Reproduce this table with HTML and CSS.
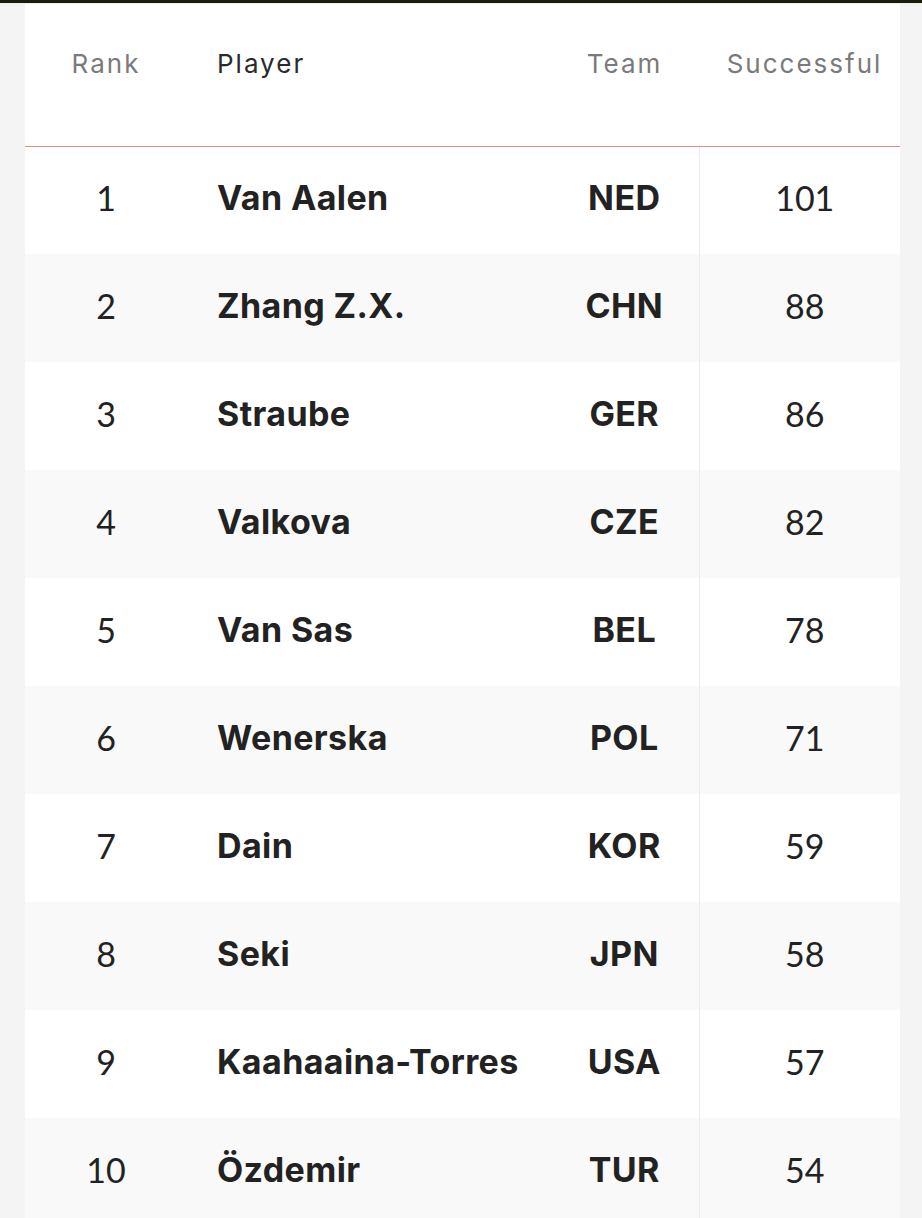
FILE: index.html
```html
<!DOCTYPE html>
<html>
<head>
<meta charset="utf-8">
<link rel="stylesheet" href="styles.css">
</head>
<body>
<div class="topbar"></div>
<div class="page">
  <table class="stats">
    <thead>
      <tr>
        <th class="c-rank">Rank</th>
        <th class="c-player">Player</th>
        <th class="c-team">Team</th>
        <th class="c-succ">Successful</th>
      </tr>
    </thead>
    <tbody>
      <tr><td class="c-rank">1</td><td class="c-player">Van Aalen</td><td class="c-team">NED</td><td class="c-succ">101</td></tr>
      <tr><td class="c-rank">2</td><td class="c-player">Zhang Z.X.</td><td class="c-team">CHN</td><td class="c-succ">88</td></tr>
      <tr><td class="c-rank">3</td><td class="c-player">Straube</td><td class="c-team">GER</td><td class="c-succ">86</td></tr>
      <tr><td class="c-rank">4</td><td class="c-player">Valkova</td><td class="c-team">CZE</td><td class="c-succ">82</td></tr>
      <tr><td class="c-rank">5</td><td class="c-player">Van Sas</td><td class="c-team">BEL</td><td class="c-succ">78</td></tr>
      <tr><td class="c-rank">6</td><td class="c-player">Wenerska</td><td class="c-team">POL</td><td class="c-succ">71</td></tr>
      <tr><td class="c-rank">7</td><td class="c-player">Dain</td><td class="c-team">KOR</td><td class="c-succ">59</td></tr>
      <tr><td class="c-rank">8</td><td class="c-player">Seki</td><td class="c-team">JPN</td><td class="c-succ">58</td></tr>
      <tr><td class="c-rank">9</td><td class="c-player">Kaahaaina-Torres</td><td class="c-team">USA</td><td class="c-succ">57</td></tr>
      <tr><td class="c-rank">10</td><td class="c-player">Özdemir</td><td class="c-team">TUR</td><td class="c-succ">54</td></tr>
    </tbody>
  </table>
</div>
</body>
</html>
```
FILE: styles.css
```css
html, body {
  margin: 0;
  padding: 0;
  background: #f4f4f4;
  height: 100%;
  overflow: hidden;
}
.topbar {
  height: 3px;
  background: #1a1c10;
  border-bottom: 1px solid #eef3d2;
}
.page {
  padding-left: 25px;
  padding-right: 22px;
}
.stats {
  width: 875px;
  border-collapse: collapse;
  table-layout: fixed;
  background: #fff;
  font-family: Lato, "Liberation Sans", sans-serif;
}
.stats th {
  height: 142px;
  padding: 0;
  padding-bottom: 22px;
  box-sizing: border-box;
  font-family: Inter, "Liberation Sans", sans-serif;
  font-weight: 400;
  font-size: 26px;
  letter-spacing: 2px;
  color: #7a7a7a;
  border-bottom: 1px solid #e0907f;
  vertical-align: middle;
}
.stats th.c-player {
  color: #2a2a2a;
}
.stats td {
  height: 108px;
  padding: 0;
  font-size: 34px;
  color: #222;
  vertical-align: middle;
  padding-bottom: 6px;
  box-sizing: border-box;
}
.stats tbody tr:nth-child(even) {
  background: #f9f9f9;
}
.c-rank {
  width: 162px;
  text-align: center;
}
.c-player {
  width: 363px;
  text-align: left;
  padding-left: 30px !important;
}
.c-team {
  width: 149px;
  text-align: center;
}
.c-succ {
  width: 201px;
  text-align: center;
  padding-left: 10px !important;
}
.stats td.c-player,
.stats td.c-team {
  font-family: Inter, "Liberation Sans", sans-serif;
  font-weight: 700;
  font-size: 34px;
  letter-spacing: 0.4px;
}
.stats td.c-succ {
  border-left: 1px solid #ececec;
}
```
